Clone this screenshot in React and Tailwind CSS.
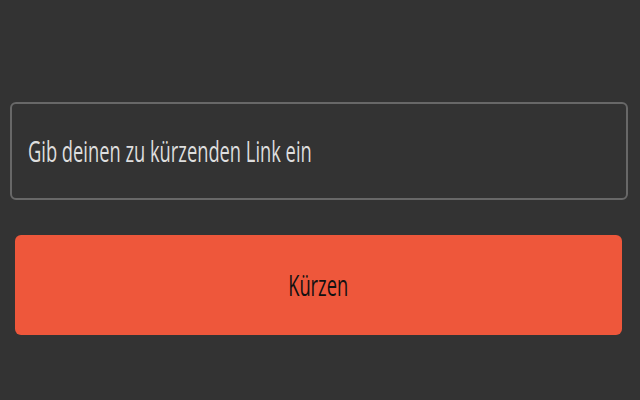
import React from "react";

const App = () => {
  return (
    <main className="h-[400px] w-full bg-[#333333] pt-[102px] font-['Open_Sans',sans-serif]">
      {/* Link input */}
      <div className="mx-[10px] flex h-[98px] w-[618px] items-center rounded-[6px] border-2 border-[#686868] pl-[16px]">
        <span className="inline-block origin-left scale-x-[0.61] whitespace-nowrap text-[30px] leading-none text-[#dedede]">
          Gib deinen zu kürzenden Link ein
        </span>
      </div>

      {/* Submit button */}
      <button className="mx-[15px] mt-[35px] flex h-[100px] w-[607px] items-center justify-center rounded-[6px] bg-[#ee573b]">
        <span className="inline-block scale-x-[0.61] whitespace-nowrap text-[30px] leading-none text-[#111111]">
          Kürzen
        </span>
      </button>
    </main>
  );
};

export default App;
